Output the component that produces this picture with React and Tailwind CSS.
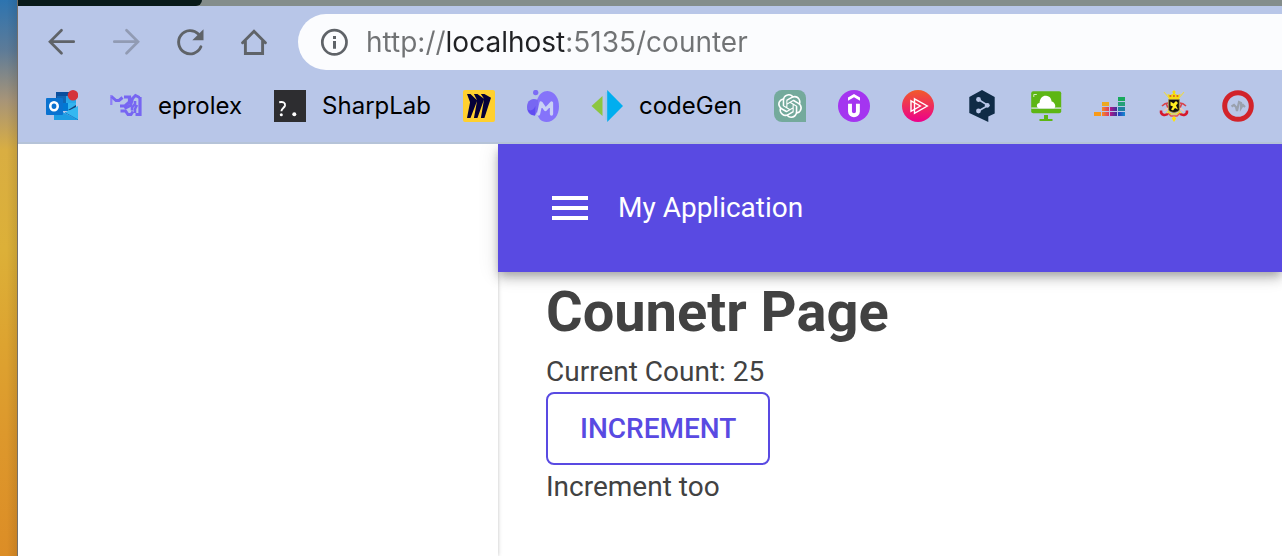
import { useState } from "react";
import { SiOpenai, SiMiro } from "react-icons/si";

const iconBase = "block h-8 w-8 shrink-0";

function BackIcon({ className }) {
  return (
    <svg viewBox="0 0 32 32" className={className} fill="none" stroke="currentColor" strokeWidth="2.7" strokeLinecap="round">
      <path d="M27.700 15.700H4.500M15.500 4.200 4 15.700 15.500 27.200" strokeLinejoin="miter" />
    </svg>
  );
}

function ForwardIcon() {
  return (
    <svg viewBox="0 0 32 32" className={iconBase} fill="none" stroke="currentColor" strokeWidth="2.7" strokeLinecap="round">
      <path d="M4.300 15.700h23.200M16.500 4.200 28 15.700 16.500 27.200" strokeLinejoin="miter" />
    </svg>
  );
}

function ReloadIcon() {
  return (
    <svg viewBox="0 0 32 32" className={iconBase}>
      <path d="M26.900 20.800A11.600 11.600 0 1 1 24.400 8" fill="none" stroke="currentColor" strokeWidth="2.9" strokeLinecap="round" />
      <path d="M29.500 3.200V14.300H18.300z" fill="currentColor" />
    </svg>
  );
}

function HomeIcon() {
  return (
    <svg viewBox="0 0 32 32" className={iconBase} fill="none" stroke="currentColor" strokeWidth="2.900" strokeLinecap="round">
      <path d="M4.600 16.800 16 5.200l11.400 11.600M7.400 15v12.500h17.200V15" />
    </svg>
  );
}

function InfoIcon() {
  return (
    <svg viewBox="0 0 28 28" className="block h-7 w-7 shrink-0">
      <circle cx="14.400" cy="14.300" r="12.100" fill="none" stroke="currentColor" strokeWidth="2.700" />
      <path d="M13 8.100h3V11h-3zM13 13.100h3v7.600h-3z" fill="currentColor" />
    </svg>
  );
}

function OutlookLogo() {
  return (
    <svg viewBox="0 0 32 32" className={iconBase}>
      <path d="M10 2h13v16H10z" fill="#0a4f9e" />
      <path d="M11 6h9v8h-9z" fill="#1066b5" />
      <path d="M20 6h10v8H20z" fill="#28a8ea" />
      <path d="M15 13h7v8h-7z" fill="#0078d4" />
      <path d="M22 13h8v8h-8z" fill="#32b4f0" />
      <path d="m22 20 8-5v7z" fill="#14447d" />
      <path d="M8 17.500 32 30H8z" fill="#1d9de3" />
      <path d="M32 16V30L19 22.500z" fill="#35b8f1" />
      <path d="m19 22.600 13 7.200" stroke="#1683cf" fill="none" />
      <rect y="8" width="17" height="17" rx="1" fill="#0a72d0" />
      <ellipse cx="8" cy="16.300" rx="3.700" ry="4" fill="none" stroke="#fff" strokeWidth="2.600" />
      <circle cx="27" cy="5.300" r="5.300" fill="#d5343b" />
    </svg>
  );
}

function EprolexLogo() {
  return (
    <svg viewBox="0 0 32 32" className={iconBase} fill="none" stroke="#7766f2">
      <path d="M1.300 5v10" stroke="#8f80f4" strokeWidth="2.200" />
      <path d="M1.500 6.500 6 10.500h3l3.500-3" strokeWidth="3" />
      <path d="M14 7h5.500v5l-4.500 4h-5" strokeWidth="3.200" />
      <path d="M10.500 21h5l2.500 3.500h3l2-3" strokeWidth="3" />
      <path d="m14.500 18.500 6-3 2-7 3-3 4 2" strokeWidth="3" />
      <path d="M30 7v17.500h-4.500" strokeWidth="3.200" />
      <path d="M25 11v3l-3 3.500v3M27 15l-2 4v4" strokeWidth="2.600" />
    </svg>
  );
}

function SharpLabLogo() {
  return (
    <svg viewBox="0 0 32 32" className={iconBase}>
      <path d="M0 0h32v32H0z" fill="#2d2d30" />
      <path d="M5.200 12.200c4-.8 6.200.5 5.800 3.300-.4 2.400-3.500 2.800-3.600 5.700" fill="none" stroke="#fff" strokeWidth="1.900" />
      <circle cx="7.300" cy="24.800" r="1.500" fill="#fff" />
      <circle cx="20.300" cy="24.300" r="2" fill="#fff" />
    </svg>
  );
}

function MiroLogo() {
  return (
    <span className="flex h-8 w-8 shrink-0 items-center justify-center rounded-xs bg-[#ffd02f]">
      <SiMiro className="h-6 w-6 text-[#050038]" />
    </span>
  );
}

function MBlobLogo() {
  return (
    <svg viewBox="0 0 32 32" className={iconBase}>
      <circle cx="8.700" cy="2.600" r="2.700" fill="#7c6cf5" />
      <path d="M10 10C12 4 16 1 20.500 1 28 1.500 32 8.500 32 16.500 32 25 27 32 19.500 32 14 32 11 28 10 23z" fill="#8573fa" />
      <path d="M0 17c0-5.500 4-10 11-7v10l-3 5.500C3 25.500 0 22 0 17z" fill="#7867f2" />
      <path d="M.500 19c3 3 6 1 8-3l-.5 9.500c-4 0-6.500-3-7.500-6.500" fill="#604cf2" />
      <path d="M11.500 24 14 13l4.500 6.500L24.500 13v11" fill="none" stroke="#c9d0f5" strokeWidth="3.300" strokeLinecap="round" strokeLinejoin="round" />
    </svg>
  );
}

function CodeGenLogo() {
  return (
    <svg viewBox="0 0 32 32" className={iconBase}>
      <path d="M11.500 6v20L.500 16z" fill="#8cc63f" />
      <path d="M14.200 2h2v28h-2z" fill="#a3c7ea" />
      <path d="M16.200 0v32L32 16z" fill="#00aeef" />
    </svg>
  );
}

function OpenAiLogo() {
  return (
    <span className="flex h-8 w-8 shrink-0 items-center justify-center rounded-lg rounded-br-none bg-[#74aa9c]">
      <SiOpenai className="h-6 w-6 text-white" />
    </span>
  );
}

function UdemyLogo() {
  return (
    <svg viewBox="0 0 32 32" className={iconBase}>
      <circle cx="16" cy="16" r="16" fill="#a435f0" />
      <path d="m16 4 6 3.500v3.300l-6-3.500-6 3.500V7.500z" fill="#fff" />
      <path d="M12 13.800v7.700c0 5 7.900 5 7.900 0v-7.700" fill="none" stroke="#fff" strokeWidth="3.900" />
    </svg>
  );
}

function PluralsightLogo() {
  return (
    <svg viewBox="0 0 32 32" className={iconBase}>
      <defs>
        <linearGradient id="pluralsight" x1="0" y1="0" x2="0" y2="1">
          <stop stopColor="#f15b2a" />
          <stop offset="1" stopColor="#ec008c" />
        </linearGradient>
      </defs>
      <circle cx="16" cy="16" r="16" fill="url(#pluralsight)" />
      <path d="M12.500 8.800 25.300 16l-12.800 7.300zM9 10.800 18.300 16 9 21.300z" fill="none" stroke="#fff" strokeWidth="1.400" />
    </svg>
  );
}

function DeepLLogo() {
  return (
    <svg viewBox="0 0 32 32" className={iconBase}>
      <path d="M16 0 28.700 7v16.500L22.300 26.500V32L3.300 23V7z" fill="#0f2b46" />
      <path d="m12.500 9.500 9.500 6-9.500 5.500" fill="none" stroke="#b8c6e8" strokeWidth="1.600" />
      <g fill="#b8c6e8">
        <circle cx="12.500" cy="9.500" r="2.400" />
        <circle cx="21.300" cy="15.300" r="2.400" />
        <circle cx="12.500" cy="21" r="2.400" />
      </g>
    </svg>
  );
}

function CloudScreenLogo() {
  return (
    <svg viewBox="0 0 32 32" className={iconBase}>
      <rect x="1.200" y="1.300" width="30" height="22" rx="2" fill="#5db614" />
      <path d="M1.200 17.300h30v1.600h-30z" fill="#b7d8ae" />
      <path d="M3.800 7V4.500h3" fill="none" stroke="#d6f0c2" />
      <path d="M9 18.300c-3-.8-2.700-5 .5-5.300C10 8 13 5.500 16 5.800c4 .2 5.500 3.500 5.600 5.700 3 .2 5.200 5.500 2.400 6.800z" fill="#fff" />
      <path d="M14 25h4v4h4.500v2h-13v-2H14z" fill="#5db614" />
    </svg>
  );
}

function DeezerLogo() {
  return (
    <svg viewBox="0 0 32 32" className={iconBase}>
      <defs>
        <linearGradient id="dzBlue" x1="0" x2="1">
          <stop stopColor="#2839ba" />
          <stop offset="1" stopColor="#148ccf" />
        </linearGradient>
        <linearGradient id="dzPurple" x1="0" x2="1">
          <stop stopColor="#b51788" />
          <stop offset="1" stopColor="#39309d" />
        </linearGradient>
        <linearGradient id="dzRed" x1="0" x2="1">
          <stop stopColor="#f68b1f" />
          <stop offset="1" stopColor="#dc3868" />
        </linearGradient>
      </defs>
      <path d="M0 22h7v4H0z" fill="#f99a18" />
      <path d="M8 12h7v4H8z" fill="#edaa20" />
      <path d="M8 17h7v4H8zM8 22h7v4H8z" fill="url(#dzRed)" />
      <path d="M16 17h7v4h-7zM16 22h7v4h-7z" fill="url(#dzPurple)" />
      <path d="M24 7h7v4h-7z" fill="#18aa5c" />
      <path d="M24 12h7v4h-7z" fill="#25a077" />
      <path d="M24 17h7v4h-7z" fill="#20819f" />
      <path d="M24 22h7v4h-7z" fill="url(#dzBlue)" />
    </svg>
  );
}

function BelgiumLogo() {
  return (
    <svg viewBox="0 0 32 32" className={iconBase}>
      <path d="m6 2 20 24M26 2 6 26" stroke="#ecd94a" strokeWidth="1.100" />
      <path d="M4 16c2-2 3-3 6-3M28 16c-2-2-3-3-6-3M8 13l2 5M24 13l-2 5" stroke="#d7434a" strokeWidth="1.600" fill="none" />
      <path d="M6 21c2-2 3-3 5-3M26 21c-2-2-3-3-5-3" stroke="#f3c9b0" strokeWidth="1.600" fill="none" />
      <path d="m9.500 4 3 1L16 3l3.500 2 3-1-1.500 5H11z" fill="#f5de10" />
      <path d="M11.500 6h9" stroke="#d94b25" strokeWidth="1.600" strokeDasharray="1.800 1.700" />
      <path d="M16 .500v4M14.500 2h3" stroke="#f8e000" strokeWidth="1.600" />
      <path d="M10.700 9.500h10.600V20c-1 2-3.500 2-5.300 2.500-1.800-.5-4.300-.5-5.300-2.500z" fill="#111" stroke="#aa8e19" strokeWidth=".7" />
      <path d="m12.500 11.500 3 2 2.500-2.500 2 2-2 2.500 2 4-3-1.500-2 2.500-2-1 2-3-2.500-1z" fill="#ffef22" />
      <path d="M3 20.500c-.5 5 4 5 7 3.500M29 20.500c.5 5-4 5-7 3.500" fill="none" stroke="#d6182c" strokeWidth="2.500" />
      <path d="m10 23 3 3h6l3-3" fill="none" stroke="#e8524a" strokeWidth="1.500" />
      <path d="m10 21.500 3 2.500h6l3-2.500" fill="none" stroke="#f8e000" strokeWidth="1.200" />
      <path d="m13.800 28.500 2.200-2.500 2.200 2.500L16 32z" fill="#ffe300" />
    </svg>
  );
}

function RedRingLogo() {
  return (
    <svg viewBox="0 0 32 32" className={iconBase}>
      <circle cx="16" cy="16" r="13.300" fill="#bac7e8" stroke="#d2232a" strokeWidth="5" />
      <path d="M9.500 16.500 12 15l2 2 1 4 2-9 2 1v5l2-3 2 2" fill="none" stroke="#9aa1ae" strokeWidth="2.200" />
    </svg>
  );
}

const bookmarks = [
  { name: "Outlook", Logo: OutlookLogo },
  { name: "eprolex", Logo: EprolexLogo, labelled: true },
  { name: "SharpLab", Logo: SharpLabLogo, labelled: true },
  { name: "Miro", Logo: MiroLogo },
  { name: "Mockups", Logo: MBlobLogo },
  { name: "codeGen", Logo: CodeGenLogo, labelled: true },
  { name: "ChatGPT", Logo: OpenAiLogo },
  { name: "Udemy", Logo: UdemyLogo },
  { name: "Pluralsight", Logo: PluralsightLogo },
  { name: "DeepL", Logo: DeepLLogo },
  { name: "Cloud desktop", Logo: CloudScreenLogo },
  { name: "Deezer", Logo: DeezerLogo },
  { name: "Belgium", Logo: BelgiumLogo },
  { name: "Monitoring", Logo: RedRingLogo },
];

function BrowserChrome() {
  return (
    <div className="relative z-20 shrink-0 font-['Inter',sans-serif]">
      <div className="h-1.5 bg-[#848d8b]">
        <div className="h-full w-[184px] rounded-br-md bg-[#081a1a]" />
      </div>
      <div className="border-b-2 border-[#b5c3d8] bg-[#b8c6e8] pt-2">
        <div className="flex items-center pl-7">
          <nav aria-label="History" className="mr-7 flex gap-8 text-[#5f6368]">
            <button type="button" aria-label="Back"><BackIcon className={iconBase} /></button>
            <button type="button" aria-label="Forward" className="text-[#919bb3]"><ForwardIcon /></button>
            <button type="button" aria-label="Reload"><ReloadIcon /></button>
            <button type="button" aria-label="Home"><HomeIcon /></button>
          </nav>
          <label className="flex h-14 min-w-0 flex-1 items-center gap-[18px] rounded-l-full bg-[#fbfcfe] pl-[22px] text-[#5f6368]">
            <InfoIcon />
            <input
              type="text"
              aria-label="Address"
              defaultValue="http://localhost:5135/counter"
              className="h-10 min-w-0 flex-1 bg-[linear-gradient(90deg,#717375_80px,#202124_80px,#202124_200px,#717375_200px)] bg-clip-text text-[28px] text-transparent outline-none"
            />
          </label>
        </div>
        <nav aria-label="Bookmarks" className="flex h-18 items-center gap-8 overflow-hidden pl-7">
          {bookmarks.map(({ name, Logo, labelled }) => (
            <a key={name} href={"#" + name} aria-label={name} className="flex shrink-0 items-center gap-4 text-2xl text-black">
              <Logo />
              {labelled && <span>{name}</span>}
            </a>
          ))}
        </nav>
      </div>
    </div>
  );
}

export default function App() {
  const [count, setCount] = useState(25);
  return (
    <div className="flex min-h-screen bg-white">
      <div className="w-[18px] shrink-0 border-r border-[#75706a] bg-[linear-gradient(90deg,transparent_40%,#00000018),linear-gradient(180deg,#2d74b0_0%,#5d7b98_9%,#a79478_18%,#d9ae42_27%,#dcb038_45%,#dda330_62%,#dd982c_78%,#dc8d26_100%)]" />
      <div className="flex min-w-0 flex-1 flex-col">
        <BrowserChrome />
        <div className="flex flex-1 overflow-hidden font-['Roboto',sans-serif] text-[28px] leading-10 text-[#424242]">
          <aside className="w-[480px] shrink-0 bg-white shadow-[0_0_4px_#00000040]" />
          <div className="min-w-0 flex-1">
            <header className="relative z-10 flex h-32 items-center bg-[#594ae2] pl-6 text-white shadow-[0_4px_8px_-2px_#00000033,0_8px_10px_#00000024,0_2px_20px_#0000001f]">
              <button type="button" aria-label="Toggle navigation" className="p-6">
                <svg viewBox="0 0 24 24" className="block h-12 w-12" fill="currentColor">
                  <path d="M3 18h18v-2H3v2zm0-5h18v-2H3v2zm0-7v2h18V6H3z" />
                </svg>
              </button>
              <span>My Application</span>
            </header>
            <main className="px-12">
              <h1 className="text-[56px] leading-20 font-bold">Counetr Page</h1>
              <p>Current Count: {count}</p>
              <button
                type="button"
                onClick={() => setCount(count + 1)}
                className="mb-0.5 block rounded-lg border-2 border-[#594ae2] px-8 py-2.5 leading-[49px] font-medium text-[#594ae2] uppercase"
              >
                Increment
              </button>
              <p>Increment too</p>
            </main>
          </div>
        </div>
      </div>
    </div>
  );
}
